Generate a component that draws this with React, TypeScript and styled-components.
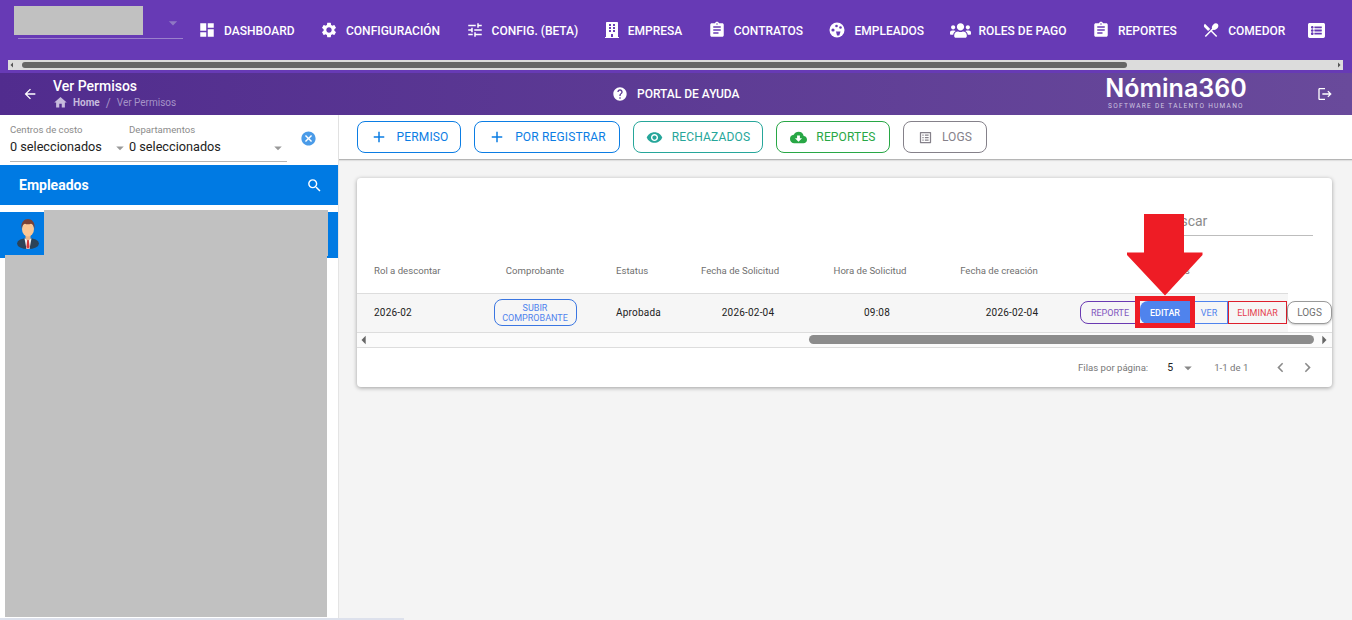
import React from "react";
import styled, { createGlobalStyle } from "styled-components";
import {
  MdDashboard, MdSettings, MdTune, MdAssignment, MdRestaurantMenu, MdListAlt, MdArrowBack, MdHome,
  MdHelp, MdLogout, MdSearch, MdCancel, MdAdd, MdVisibility, MdCloudDownload, MdChevronLeft,
  MdChevronRight, MdArrowDropDown, MdArrowLeft, MdArrowRight,
} from "react-icons/md";
import { FaBuilding, FaUsers, FaListAlt } from "react-icons/fa";

const GlobalStyle = createGlobalStyle`
  html, body { margin: 0; padding: 0; overflow: hidden; }
  body { font-family: Roboto, "Liberation Sans", sans-serif; background: #f4f4f4; }
  * { box-sizing: border-box; }
`;

function FaceIcon() {
  return (
    <svg width="18" height="18" viewBox="0 0 18 18">
      <circle cx="9" cy="9" r="7.500" fill="#fff" />
      <circle cx="8.500" cy="5" r="1.300" fill="#673ab5" />
      <circle cx="12.500" cy="6.500" r="1.300" fill="#673ab5" />
      <circle cx="5" cy="9" r="1.600" fill="#673ab5" />
      <path d="M8 10.500h4.500l-1.200 4h-2.300z" fill="#673ab5" />
    </svg>
  );
}

const navItems = [
  { icon: <MdDashboard size={18} />, label: "DASHBOARD" },
  { icon: <MdSettings size={18} />, label: "CONFIGURACIÓN" },
  { icon: <MdTune size={18} />, label: "CONFIG. (BETA)" },
  { icon: <FaBuilding size={16} />, label: "EMPRESA" },
  { icon: <MdAssignment size={18} />, label: "CONTRATOS" },
  { icon: <FaceIcon />, label: "EMPLEADOS" },
  { icon: <FaUsers size={21} />, label: "ROLES DE PAGO" },
  { icon: <MdAssignment size={18} />, label: "REPORTES" },
  { icon: <MdRestaurantMenu size={18} />, label: "COMEDOR" },
  { icon: <FaListAlt size={17} />, label: "" },
];

const headers = [
  { label: "Rol a descontar", align: "left" },
  { label: "Comprobante", align: "center" },
  { label: "Estatus", align: "left" },
  { label: "Fecha de Solicitud", align: "center" },
  { label: "Hora de Solicitud", align: "center" },
  { label: "Fecha de creación", align: "center" },
  { label: "Acciones", align: "center" },
];

export default function App() {
  return (
    <Page>
      <GlobalStyle />
      <NavBar>
        <NavRow>
          <CompanySelect>
            <MdArrowDropDown size={20} />
          </CompanySelect>
          {navItems.map((item, i) => (
            <NavItem key={i}>
              {item.icon}
              {item.label && <NavLabel>{item.label}</NavLabel>}
            </NavItem>
          ))}
        </NavRow>
        <NavScroll>
          <MdArrowLeft size={12} />
          <NavThumb />
          <MdArrowRight size={12} />
        </NavScroll>
      </NavBar>

      <SubHeader>
        <TitleGroup>
          <MdArrowBack size={16} />
          <div>
            <PageTitle>Ver Permisos</PageTitle>
            <Crumbs>
              <MdHome size={15} />
              <strong>Home</strong>
              <CrumbSep>/</CrumbSep>
              <span>Ver Permisos</span>
            </Crumbs>
          </div>
        </TitleGroup>
        <HelpLink>
          <MdHelp size={16} />
          <span>PORTAL DE AYUDA</span>
        </HelpLink>
        <Logo>
          <LogoName>Nómina360</LogoName>
          <LogoTag>SOFTWARE DE TALENTO HUMANO</LogoTag>
        </Logo>
        <LogoutIcon>
          <MdLogout size={16} />
        </LogoutIcon>
      </SubHeader>

      <Body>
        <Sidebar>
          <Filters>
            <FilterRow>
              <Filter $width="119px">
                <FilterLabel>Centros de costo</FilterLabel>
                <FilterValue>
                  0 seleccionados
                  <MdArrowDropDown size={18} />
                </FilterValue>
              </Filter>
              <Filter $width="158px">
                <FilterLabel>Departamentos</FilterLabel>
                <FilterValue>
                  0 seleccionados
                  <MdArrowDropDown size={18} />
                </FilterValue>
              </Filter>
            </FilterRow>
            <ClearIcon>
              <MdCancel size={17} />
            </ClearIcon>
          </Filters>
          <EmployeesHeader>
            <span>Empleados</span>
            <MdSearch size={17} />
          </EmployeesHeader>
          <EmployeeRow>
            <Avatar />
          </EmployeeRow>
        </Sidebar>

        <Main>
          <Toolbar>
            <ToolButton $color="#0b7de4" $width="104px">
              <MdAdd size={18} />
              PERMISO
            </ToolButton>
            <ToolButton $color="#0b7de4" $width="146px">
              <MdAdd size={18} />
              POR REGISTRAR
            </ToolButton>
            <ToolButton $color="#26a69a" $width="130px">
              <MdVisibility size={17} />
              RECHAZADOS
            </ToolButton>
            <ToolButton $color="#28a745" $width="114px">
              <MdCloudDownload size={17} />
              REPORTES
            </ToolButton>
            <ToolButton $color="#85818a" $width="84px">
              <MdListAlt size={15} />
              LOGS
            </ToolButton>
          </Toolbar>

          <Content>
            <Card>
              <SearchRow>
                <SearchField>
                  <MdSearch size={17} />
                  <span>Buscar</span>
                </SearchField>
              </SearchRow>
              <TableHead>
                {headers.map((col) => (
                  <HeadCell key={col.label} $align={col.align}>
                    {col.label}
                  </HeadCell>
                ))}
              </TableHead>
              <DataRow>
                <DataCell $align="left">2026-02</DataCell>
                <DataCell $align="center">
                  <UploadButton>SUBIR COMPROBANTE</UploadButton>
                </DataCell>
                <DataCell $align="left">Aprobada</DataCell>
                <DataCell $align="center">2026-02-04</DataCell>
                <DataCell $align="center">09:08</DataCell>
                <DataCell $align="center">2026-02-04</DataCell>
                <Actions>
                  <ActionButton $width="60px" $color="#7f55bd" $border="#6a3ab2" $radius="8px 0 0 8px">
                    REPORTE
                  </ActionButton>
                  <EditButton>EDITAR</EditButton>
                  <ActionButton $width="38px" $color="#4f83ed" $border="#4f83ed" $radius="0">
                    VER
                  </ActionButton>
                  <ActionButton $width="59px" $color="#e53e4d" $border="#dd1f2c" $radius="0">
                    ELIMINAR
                  </ActionButton>
                  <LogsButton>LOGS</LogsButton>
                </Actions>
              </DataRow>
              <TableScroll>
                <MdArrowLeft size={20} />
                <TableThumb />
                <MdArrowRight size={20} />
              </TableScroll>
              <Pagination>
                <PagerText>Filas por página:</PagerText>
                <PerPage>
                  5
                  <MdArrowDropDown size={18} />
                </PerPage>
                <PagerText>1-1 de 1</PagerText>
                <PagerIcons>
                  <MdChevronLeft size={19} />
                  <MdChevronRight size={19} />
                </PagerIcons>
              </Pagination>
            </Card>
          </Content>
        </Main>
      </Body>

      <Redaction $x={14} $y={6} $w={129} $h={29} />
      <Redaction $x={44} $y={210} $w={284} $h={46} />
      <Redaction $x={5} $y={255} $w={322} $h={362} />
      <BottomScroll />

      <Highlight />
      <ArrowMark viewBox="0 0 76 82" aria-hidden="true">
        <path d="M17 0H57V38.500H75.500V41L38 81.500L0 41V38.500H17Z" fill="#ee1c25" />
      </ArrowMark>
    </Page>
  );
}

function Avatar() {
  return (
    <AvatarSvg viewBox="0 0 22 30">
      <ellipse cx="11" cy="24.500" rx="11" ry="5.500" fill="#2c4358" />
      <path d="M7.500 19.500h7L12.500 30h-3z" fill="#f2f2f2" />
      <path d="M10.200 21h1.600l.8 7-1.600 2-1.600-2z" fill="#d63a3a" />
      <rect x="8.500" y="15" width="5" height="6" rx="2" fill="#eab488" />
      <ellipse cx="11" cy="10" rx="6" ry="7.500" fill="#fbc795" />
      <path d="M4.500 10C3.500 3 7.500 0 11 0s7.500 3 6.500 10c-.6-3-1.500-5-3.500-5.300-2 .8-4.500.8-6 0C6 5 5 7 4.500 10z" fill="#7a4237" />
    </AvatarSvg>
  );
}

const Page = styled.div`
  position: relative;
  display: flex;
  flex-direction: column;
  width: 1352px;
  height: 620px;
  overflow: hidden;
  background: #f4f4f4;
`;
const NavBar = styled.header`
  height: 73px;
  background: #673ab5;
  flex-shrink: 0;
`;
const NavRow = styled.nav`
  display: flex;
  align-items: center;
  height: 60px;
  padding: 0 0 0 18px;
  overflow: hidden;
`;
const CompanySelect = styled.div`
  display: flex;
  justify-content: flex-end;
  align-items: center;
  align-self: flex-start;
  width: 165px;
  height: 39px;
  margin: 0 15px 0 0;
  padding-top: 8px;
  border-bottom: 1px solid #9b80cc;
  color: #8f78c4;
  flex-shrink: 0;
`;
const NavItem = styled.div`
  display: flex;
  align-items: center;
  gap: 8px;
  margin-right: 25.500px;
  color: #fff;
  font-size: 12px;
  font-weight: 500;
  white-space: nowrap;
  flex-shrink: 0;
  &:last-child { margin-left: -3px; }
`;
const NavLabel = styled.span`
  padding-top: 1px;
`;
const NavScroll = styled.div`
  display: flex;
  align-items: center;
  height: 10px;
  margin: 0 9px 0 8px;
  background: #dcdcdc;
  color: #555;
  svg { flex-shrink: 0; margin: 0 -2px; }
`;
const NavThumb = styled.div`
  width: 1105px;
  height: 6px;
  margin: 0 auto 0 6px;
  border-radius: 3px;
  background: #666;
`;
const SubHeader = styled.div`
  display: flex;
  align-items: center;
  height: 42px;
  flex-shrink: 0;
  padding: 0 19px 0 22px;
  color: #fff;
  background: linear-gradient(90deg, #512c8e, #694a9b);
`;
const TitleGroup = styled.div`
  display: flex;
  align-items: center;
  gap: 15px;
  width: 590px;
`;
const PageTitle = styled.div`
  font-size: 14px;
  font-weight: 500;
  line-height: 16px;
`;
const Crumbs = styled.div`
  display: flex;
  align-items: center;
  gap: 5px;
  margin-top: 1px;
  font-size: 10px;
  color: #a593c7;
  strong { font-weight: 700; color: #c7bbdd; }
  svg { color: #c7bbdd; }
`;
const CrumbSep = styled.span`
  margin: 0 1px;
  font-size: 12px;
`;
const HelpLink = styled.div`
  display: flex;
  align-items: center;
  gap: 9px;
  width: 491px;
  font-size: 12px;
  font-weight: 500;
`;
const Logo = styled.div`
  display: flex;
  flex-direction: column;
  align-items: center;
  width: 146px;
  margin-top: -1px;
`;
const LogoName = styled.div`
  font-family: Inter, sans-serif;
  font-size: 25px;
  font-weight: 600;
  line-height: 23px;
`;
const LogoTag = styled.div`
  margin-top: 3px;
  font-size: 6.500px;
  letter-spacing: 1.300px;
  line-height: 7px;
  color: #cfc6e0;
  white-space: nowrap;
`;
const LogoutIcon = styled.div`
  display: flex;
  margin-left: auto;
`;
const Body = styled.div`
  display: flex;
  flex: 1;
  min-height: 0;
`;
const Sidebar = styled.aside`
  width: 339px;
  flex-shrink: 0;
  background: #fff;
  border-right: 1px solid #e4e4e4;
`;
const Filters = styled.div`
  display: flex;
  height: 50px;
  padding: 9px 0 0 10px;
`;
const FilterRow = styled.div`
  display: flex;
  width: 277px;
  height: 38px;
  border-bottom: 1px solid #b5b5b5;
`;
const Filter = styled.div<{ $width: string }>`
  width: ${(p) => p.$width};
  flex-shrink: 0;
`;
const FilterLabel = styled.div`
  font-size: 9.600px;
  line-height: 12px;
  color: #8b8b8b;
`;
const FilterValue = styled.div`
  display: flex;
  align-items: center;
  justify-content: space-between;
  margin-top: 1px;
  font-size: 12.700px;
  line-height: 18px;
  color: #222;
  svg { color: #999; margin-top: 2px; flex-shrink: 0; }
`;
const ClearIcon = styled.div`
  display: flex;
  margin: 6px 0 0 13px;
  height: 17px;
  color: #4a9be8;
`;
const EmployeesHeader = styled.div`
  display: flex;
  align-items: center;
  justify-content: space-between;
  height: 40px;
  padding: 0 15px 0 19px;
  background: #007ae3;
  color: #fff;
  font-size: 14px;
  font-weight: 700;
`;
const EmployeeRow = styled.div`
  display: flex;
  align-items: center;
  height: 46px;
  margin-top: 7px;
  padding-left: 17px;
  background: #007ae3;
`;
const AvatarSvg = styled.svg`
  width: 22px;
  height: 30px;
  margin-top: -3px;
`;
const Main = styled.main`
  flex: 1;
  min-width: 0;
  display: flex;
  flex-direction: column;
`;
const Toolbar = styled.div`
  display: flex;
  align-items: flex-start;
  gap: 13px;
  height: 45px;
  padding: 6px 0 0 18px;
  background: #fff;
  border-bottom: 1px solid #b5b5b5;
  box-shadow: 0 1px 1px rgba(0, 0, 0, 0.08);
`;
const ToolButton = styled.button<{ $color: string; $width: string }>`
  display: flex;
  align-items: center;
  justify-content: center;
  gap: 9px;
  width: ${(p) => p.$width};
  height: 32px;
  padding: 0;
  background: #fff;
  border: 1px solid ${(p) => p.$color};
  border-radius: 8px;
  color: ${(p) => p.$color};
  font-family: Roboto, sans-serif;
  font-size: 12px;
  letter-spacing: 0.15px;
`;
const Content = styled.div`
  padding: 18px 19px 0 18px;
`;
const Card = styled.section`
  width: 975px;
  height: 209px;
  background: #fff;
  border-radius: 4px;
  box-shadow: 0 1px 4px rgba(0, 0, 0, 0.35);
`;
const SearchRow = styled.div`
  display: flex;
  justify-content: flex-end;
  height: 58px;
  padding: 28px 19px 0 0;
`;
const SearchField = styled.div`
  display: flex;
  align-items: center;
  gap: 1px;
  width: 167px;
  height: 30px;
  border-bottom: 1px solid #bdbdbd;
  font-size: 14px;
  color: #8a8a8a;
`;
const TableHead = styled.div`
  display: grid;
  grid-template-columns: 121px 114px 88px 120px 140px 118px 224px;
  align-items: center;
  height: 58px;
  width: 931px;
  padding-top: 12px;
  border-bottom: 1px solid #ddd;
`;
const HeadCell = styled.div<{ $align: string }>`
  &:first-child { padding-left: 17px; }
  &:nth-child(3) { padding-left: 24px; }
  text-align: ${(p) => p.$align};
  font-size: 9.600px;
  color: #6f6f6f;
  white-space: nowrap;
`;
const DataRow = styled.div`
  display: grid;
  grid-template-columns: 121px 114px 88px 136px 122px 148px 246px;
  align-items: center;
  height: 38px;
  width: 975px;
  padding-bottom: 1px;
  background: linear-gradient(90deg, #f6f6f6 931px, transparent 931px);
`;
const DataCell = styled.div<{ $align: string }>`
  display: flex;
  justify-content: ${(p) => (p.$align === "left" ? "flex-start" : "center")};
  &:first-child { padding-left: 17px; }
  &:nth-child(3) { padding-left: 24px; }
  font-size: 10px;
  color: #222;
  letter-spacing: 0.2px;
`;
const UploadButton = styled.button`
  width: 83px;
  height: 27px;
  padding: 0 6px;
  background: transparent;
  border: 1px solid #3b76e1;
  border-radius: 8px;
  color: #4f83ed;
  font-family: Roboto, sans-serif;
  font-size: 9px;
  line-height: 10px;
`;
const Actions = styled.div`
  display: flex;
  align-items: center;
  margin-left: -6px;
`;
const ActionButton = styled.button<{ $width: string; $color: string; $border: string; $radius: string }>`
  width: ${(p) => p.$width};
  height: 23px;
  padding: 0;
  background: transparent;
  border: 1px solid ${(p) => p.$border};
  border-radius: ${(p) => p.$radius};
  color: ${(p) => p.$color};
  font-family: Roboto, sans-serif;
  font-size: 9px;
`;
const EditButton = styled.button`
  width: 50px;
  height: 23px;
  padding: 0;
  border: none;
  border-radius: 8px 0 0 8px;
  background: #4f83ed;
  color: #fff;
  font-family: Roboto, sans-serif;
  font-size: 9px;
  font-weight: 500;
`;
const LogsButton = styled.button`
  width: 45px;
  height: 23px;
  padding: 0;
  background: #fff;
  border: 1px solid #9a9a9a;
  border-radius: 8px;
  color: #6f6f6f;
  font-family: Roboto, sans-serif;
  font-size: 10px;
  box-shadow: 0 1px 2px rgba(0, 0, 0, 0.2);
`;
const TableScroll = styled.div`
  display: flex;
  align-items: center;
  height: 16px;
  padding-bottom: 1px;
  background: #fbfbfb;
  border-top: 1px solid #ddd;
  border-bottom: 1px solid #ddd;
  color: #666;
  svg { flex-shrink: 0; }
  svg:first-child { margin-left: -3px; }
  svg:last-child { margin-right: -2px; }
`;
const TableThumb = styled.div`
  width: 505px;
  height: 9px;
  margin-left: auto;
  border-radius: 5px;
  background: #8c8c8c;
`;
const Pagination = styled.div`
  display: flex;
  align-items: center;
  height: 39px;
  padding: 0 15px 0 721px;
  font-size: 9.600px;
  color: #777;
`;
const PagerText = styled.span`
  white-space: nowrap;
`;
const PerPage = styled.div`
  display: flex;
  align-items: center;
  gap: 6px;
  width: 47px;
  margin-left: 19px;
  color: #222;
  font-size: 10.500px;
  svg { color: #888; flex-shrink: 0; }
`;
const PagerIcons = styled.div`
  display: flex;
  gap: 8px;
  margin-left: auto;
  color: #8a8a8a;
`;
const Redaction = styled.div<{ $x: number; $y: number; $w: number; $h: number }>`
  position: absolute;
  left: ${(p) => p.$x}px;
  top: ${(p) => p.$y}px;
  width: ${(p) => p.$w}px;
  height: ${(p) => p.$h}px;
  background: #c1c1c1;
`;
const BottomScroll = styled.div`
  position: absolute;
  left: 0;
  bottom: 0;
  width: 404px;
  height: 2px;
  background: #dde1ec;
`;
const Highlight = styled.div`
  position: absolute;
  left: 1135px;
  top: 296px;
  width: 60px;
  height: 32px;
  border: 5px solid #ee1c25;
`;
const ArrowMark = styled.svg`
  position: absolute;
  left: 1127px;
  top: 214px;
  width: 76px;
  height: 82px;
`;
